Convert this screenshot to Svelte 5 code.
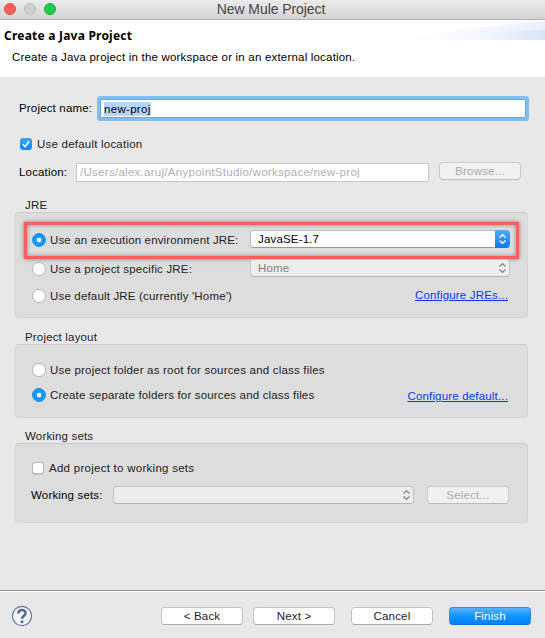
<script>
  let projectName = $state('new-proj');
  let jre = $state('environment');
  let folders = $state('separate');
</script>

{#snippet arrows()}
  <svg class="arrows" width="9" height="12" viewBox="0 0 9 12" aria-hidden="true">
    <path d="M1.5 4.5 4.5 1.7 7.5 4.5M1.5 7.5 4.5 10.3 7.5 7.5" />
  </svg>
{/snippet}

{#snippet radio(checked, pick)}
  <button class="radio" class:checked onclick={pick} role="radio" aria-checked={checked} aria-label="Option"></button>
{/snippet}

<div class="window">
  <div class="titlebar">
    <div class="lights"><i class="red"></i><i class="grey"></i><i class="green"></i></div>
    <span class="caption">New Mule Project</span>
  </div>

  <header>
    <div>
      <h1>Create a Java Project</h1>
      <p><span class="t intro">Create a Java project in the workspace or in an external location.</span></p>
    </div>
    <svg class="swoosh" width="140" height="20" viewBox="0 0 140 20" aria-hidden="true">
      <defs>
        <linearGradient id="sky"><stop offset="0" stop-color="#fff" stop-opacity="0" /><stop offset="1" stop-color="#d9e4f6" /></linearGradient>
        <linearGradient id="haze"><stop offset="0" stop-color="#fff" /><stop offset="1" stop-color="#ebf0fb" /></linearGradient>
      </defs>
      <path fill="url(#haze)" d="M0 20Q70 6 140 1V20Z" />
      <path fill="url(#sky)" d="M40 20Q85 11 140 10V20Z" />
    </svg>
  </header>

  <main>
    <div class="row name">
      <span class="t dark w-name">Project name:</span>
      <div class="field focus"><span class="t selected">{projectName}</span></div>
    </div>
    <div class="row default">
      <span class="check on"><svg width="12" height="12" viewBox="0 0 12 12"><path d="M3 6.3 5.1 8.7 9 3.2" /></svg></span>
      <span class="t w-default">Use default location</span>
    </div>
    <div class="row location">
      <span class="t dark w-loc">Location:</span>
      <div class="field off"><span class="t w-path">/Users/alex.aruj/AnypointStudio/workspace/new-proj</span></div>
      <button class="btn off"><span class="t">Browse...</span></button>
    </div>

    <h2 class="t">JRE</h2>
    <section class="jre">
      <div class="row marked">
        {@render radio(jre === 'environment', () => (jre = 'environment'))}
        <span class="t w-env">Use an execution environment JRE:</span>
        <div class="combo"><span class="t">JavaSE-1.7</span><div class="cap">{@render arrows()}</div></div>
      </div>
      <div class="row specific">
        {@render radio(jre === 'project', () => (jre = 'project'))}
        <span class="t w-env">Use a project specific JRE:</span>
        <div class="combo off"><span class="t">Home</span><div class="cap">{@render arrows()}</div></div>
      </div>
      <div class="row usedefault">
        {@render radio(jre === 'default', () => (jre = 'default'))}
        <span class="t">Use default JRE (currently 'Home')</span>
        <span class="t link">Configure JREs...</span>
      </div>
    </section>

    <h2 class="t">Project layout</h2>
    <section class="layout">
      <div class="row root">
        {@render radio(folders === 'root', () => (folders = 'root'))}
        <span class="t">Use project folder as root for sources and class files</span>
      </div>
      <div class="row separate">
        {@render radio(folders === 'separate', () => (folders = 'separate'))}
        <span class="t">Create separate folders for sources and class files</span>
        <span class="t link">Configure default...</span>
      </div>
    </section>

    <h2 class="t">Working sets</h2>
    <section class="sets">
      <div class="row add">
        <span class="check"></span>
        <span class="t">Add project to working sets</span>
      </div>
      <div class="row pick">
        <span class="t dark w-sets">Working sets:</span>
        <div class="combo off"><div class="cap">{@render arrows()}</div></div>
        <button class="btn off"><span class="t">Select...</span></button>
      </div>
    </section>
  </main>

  <footer>
    <svg class="help" width="22" height="22" viewBox="0 0 22 22" aria-hidden="true">
      <circle cx="11" cy="11" r="9.6" fill="#f1f3f6" stroke="#5f7394" stroke-width="1.1" />
      <path d="M7.4 8.4C7.4 3.8 14.6 3.8 14.6 8.1 14.6 10.9 11 10.9 11 13.7" fill="none" stroke="#526b8c" stroke-width="2.5" />
      <circle cx="11" cy="16.7" r="1.5" fill="#526b8c" />
    </svg>
    <button class="btn"><span class="t">&lt; Back</span></button>
    <button class="btn next"><span class="t">Next &gt;</span></button>
    <button class="btn cancel"><span class="t">Cancel</span></button>
    <button class="btn primary"><span class="t">Finish</span></button>
  </footer>
</div>

<style>
  :global(body) { margin: 0; background: #e8e8e8; }
  .window {
    width: 545px; height: 638px; overflow: hidden; background: #e8e8e8; color: #222;
    display: flex; flex-direction: column;
    font: 11.5px/16px "Liberation Sans", Arial, sans-serif;
  }
  .window * { box-sizing: border-box; }
  .t { letter-spacing: .17px; white-space: pre; font-size: 11.5px; font-weight: 400; }
  .dark { color: #000; }
  button { font: inherit; color: inherit; margin: 0; }

  .titlebar {
    height: 20px; flex: none; display: grid; grid-template-columns: 60px 1fr 63px; align-items: center;
    background: linear-gradient(#ececec, #d3d3d3); border-bottom: 1px solid #b1b1b1;
  }
  .lights { display: flex; gap: 8px; padding-left: 4px; margin-top: -2px; }
  .lights i { width: 12px; height: 12px; flex: none; border-radius: 50%; border: 1px solid; }
  .red { background: #ff5f5a; border-color: #e24b47 !important; }
  .grey { background: #d0d0d0; border-color: #bcbcbc !important; }
  .green { background: #20cc4c; border-color: #1bac37 !important; }
  .caption { justify-self: center; font-size: 14px; letter-spacing: -.08px; color: #464646; line-height: 18px; margin-top: -2px; }

  header { height: 57px; flex: none; background: #fff; display: flex; justify-content: space-between; border-bottom: 1px solid #f4f4f4; }
  h1 { margin: 7px 0 0 4px; font: 700 12px/18px "Noto Sans", "Open Sans", sans-serif; letter-spacing: .22px; color: #000; white-space: pre; }
  p { margin: 4px 0 0 12px; color: #000; }
  .intro { letter-spacing: .195px; }
  .swoosh { flex: none; }

  main { flex: 1; padding: 19px 17px 0 15px; }
  .row { display: flex; align-items: center; }
  .name { height: 25px; padding-left: 4px; }
  .w-name { width: 81px; margin-top: -2px; }
  .field { flex: 1; background: #fff; display: flex; align-items: center; }
  .focus { height: 19px; border: 1px solid #69a7da; box-shadow: 0 0 0 3px #80bff0; border-radius: 1px; margin-right: 2px; padding-left: 3px; }
  .selected { background: #b1d7fe; color: #000; line-height: 14px; letter-spacing: .3px; }
  .default { height: 20px; margin-top: 13px; padding-left: 5px; gap: 5px; }
  .w-default { letter-spacing: .22px; }
  .check { width: 12px; height: 12px; flex: none; border: 1px solid #bbb; border-radius: 3px; background: #fff; box-shadow: 0 .5px 0 #aaa; }
  .check.on { background: linear-gradient(#3aa7fb, #1086fb); border: 0; box-shadow: none; }
  .check svg { display: block; }
  .check path { fill: none; stroke: #fff; stroke-width: 1.7; }
  .location { height: 20px; margin-top: 8px; padding-left: 4px; padding-right: 7px; }
  .w-loc { width: 57px; }
  .w-path { letter-spacing: .28px; }
  .field.off { height: 19px; border: 1px solid #c9c9c9; color: #b0b0b0; padding-left: 3px; margin-right: 10px; }
  .btn {
    width: 82px; height: 18px; flex: none; padding: 0; border: 1px solid #c2c2c2; border-bottom-color: #acacac;
    border-radius: 4px; background: #fff; display: flex; align-items: center; justify-content: center; color: #222;
  }
  .location .btn { margin-top: -2px; }
  .btn.off { background: #f1f1f1; border-color: #cbcbcb; border-bottom-color: #bbb; color: #acacac; }

  h2 { margin: 0 0 0 10px; height: 15px; line-height: 16px; }
  section { background: #ddd; border: 1px solid #d5d5d5; border-top-color: #cbcbcb; border-radius: 4px; margin: 0; }
  .location + h2 { margin-top: 15px; }
  .jre { height: 106px; padding: 9px 8px 0; }
  .marked { height: 37px; border: 3px solid #f5625a; padding: 0 6px 1px 5px; box-shadow: 0 0 4px #777, inset 0 0 4px #888; }
  .marked .w-env { letter-spacing: .15px; }
  .marked .combo { margin-top: -2px; }
  .radio { width: 14px; height: 14px; flex: none; padding: 0; border-radius: 50%; border: 1px solid #b5b5b5; background: #fff; margin-right: 4px; display: flex; align-items: center; justify-content: center; }
  .radio.checked { border-color: #1f87e5; background: radial-gradient(circle, #fff 0 2px, #189afc 2.6px); }
  .w-env { width: 200px; }
  .combo { flex: 1; height: 18px; display: flex; align-items: center; background: #fff; border: 1px solid #bcbcbc; border-bottom-color: #999; border-radius: 4px; padding-left: 7px; color: #000; }
  .cap { width: 15px; height: 18px; margin: -1px -1px -1px auto; border-radius: 0 4px 4px 0; background: linear-gradient(#52aafb, #067cfb); display: flex; align-items: center; justify-content: center; }
  .arrows path { fill: none; stroke: #fff; stroke-width: 1.4; }
  .combo.off { background: #ededed; border-color: #c5c5c5; border-bottom-color: #b5b5b5; color: #7e7e7e; }
  .off .cap { background: none; }
  .off .arrows path { stroke: #8b8b8b; }
  .specific { height: 19px; padding: 0 9px 0 8px; }
  .specific .combo { margin-top: -1px; }
  .usedefault { height: 20px; padding: 0 11px 0 8px; margin-top: 8px; }
  .link { color: #0a37f0; text-decoration: underline; margin-left: auto; }
  .usedefault .link { margin-top: -2px; }
  .layout { height: 74px; padding: 12px 19px 0 16px; }
  .root { height: 26px; }
  .root .t { letter-spacing: .2px; }
  .separate { height: 24px; }
  .separate .link { margin-top: 2px; }
  .jre + h2 { margin-top: 11px; }
  .layout + h2 { margin-top: 10px; }
  .sets { height: 80px; padding: 15px 18px 0 16px; }
  .add { height: 18px; gap: 5px; }
  .add .t { letter-spacing: .27px; }
  .pick { height: 20px; margin-top: 8px; margin-left: -1px; }
  .w-sets { width: 82px; }
  .pick .btn { margin-left: 13px; }

  footer { height: 48px; flex: none; border-top: 1px solid #989898; box-shadow: inset 0 1px 0 #fff; display: flex; align-items: center; padding: 3px 0 0 11px; }
  .help { margin-right: 128px; flex: none; }
  .next { margin-left: 10px; }
  .cancel, .primary { margin-left: 16px; }
  .primary { background: linear-gradient(#5ab2fa, #0a93fd 55%, #087ffc); border-color: #2790ee; border-bottom-color: #0771dd; color: #fff; }
</style>
